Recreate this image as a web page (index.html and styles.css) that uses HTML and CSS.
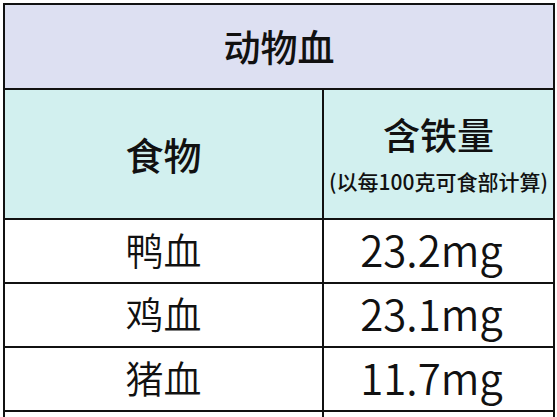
FILE: index.html
```html
<!DOCTYPE html>
<html lang="zh">
<head>
<meta charset="utf-8">
<link rel="stylesheet" href="styles.css">
</head>
<body>
<div class="wrap">
<table class="iron">
  <colgroup><col class="c1"><col class="c2"></colgroup>
  <tr class="title-row"><th colspan="2" class="title">动物血</th></tr>
  <tr class="head-row">
    <th class="col-food">食物</th>
    <th class="col-iron"><div class="h-main">含铁量</div><div class="h-sub">(以每100克可食部计算)</div></th>
  </tr>
  <tr class="data-row"><td>鸭血</td><td class="num">23.2mg</td></tr>
  <tr class="data-row"><td>鸡血</td><td class="num">23.1mg</td></tr>
  <tr class="data-row"><td>猪血</td><td class="num">11.7mg</td></tr>
  <tr class="data-row"><td>&nbsp;</td><td>&nbsp;</td></tr>
</table>
</div>
</body>
</html>
```
FILE: styles.css
```css
html, body {
  margin: 0;
  padding: 0;
  background: #ffffff;
}
body {
  font-family: "Noto Sans CJK SC", "Noto Sans", sans-serif;
  color: #111111;
  overflow: hidden;
}
.wrap {
  padding: 3px 4px 0 3px;
}
.iron {
  border-collapse: collapse;
  width: 550px;
  table-layout: fixed;
}
.c1 {
  width: 319px;
}
.c2 {
  width: 231px;
}
.iron th, .iron td {
  border: 2px solid #111111;
  padding: 0;
  text-align: center;
  vertical-align: middle;
}
.title-row {
  height: 85px;
}
.title {
  background: #dde0f2;
  font-size: 37px;
  font-weight: 500;
  line-height: 1;
  padding-top: 2px;
}
.head-row {
  height: 130px;
}
.head-row th {
  background: #d2f0ef;
  font-weight: 500;
}
.col-food {
  font-size: 38px;
  line-height: 1;
}
.h-main {
  font-size: 37px;
  line-height: 1.2;
}
.h-sub {
  font-size: 21px;
  font-weight: 500;
  line-height: 1.4;
  margin-top: 10px;
}
.data-row {
  height: 64px;
}
.data-row td {
  font-size: 38px;
  font-weight: 350;
  line-height: 1;
  padding-bottom: 4px;
}
.data-row td.num {
  font-size: 42px;
  font-weight: 350;
  padding-right: 14px;
}
```
